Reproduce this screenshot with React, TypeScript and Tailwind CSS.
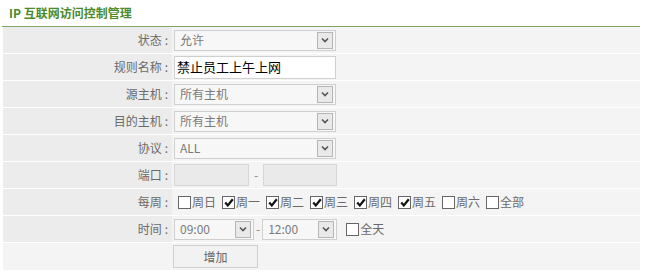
import { ReactNode } from "react";

const font = { fontFamily: '"Noto Sans CJK SC", "Liberation Sans", sans-serif' };

function Arrow() {
  return (
    <span className="flex h-[17px] w-[16px] items-center justify-center border border-[#b5b5b5] bg-[#e9e9e9]">
      <svg width="8" height="6" viewBox="0 0 8 6">
        <path d="M1 1.5 L4 4.5 L7 1.5" fill="none" stroke="#555" strokeWidth="1.6" />
      </svg>
    </span>
  );
}

function Select({ value, width }: { value: string; width: string }) {
  return (
    <div className={`flex h-[21px] ${width} items-center justify-between border border-[#cfcfcf] bg-[#f7f7f7] pl-[5px] pr-[2px]`}>
      <span className="text-[12px] text-[#7a7a7a]">{value}</span>
      <Arrow />
    </div>
  );
}

function Box({ checked }: { checked?: boolean }) {
  return (
    <span className="flex h-[13px] w-[13px] items-center justify-center border border-[#666] bg-white">
      {checked && (
        <svg width="10" height="9" viewBox="0 0 10 9">
          <path d="M1.2 4.6 L3.8 7.4 L8.8 1.2" fill="none" stroke="#111" strokeWidth="2.2" />
        </svg>
      )}
    </span>
  );
}

function Row({ label, children }: { label: string; children: ReactNode }) {
  return (
    <div className="flex h-[27px] border-b border-white">
      <div className="flex w-[169px] items-center justify-end bg-[#ececec] pr-[4px] text-[12px] text-[#6a6a6a]">
        {label}
        <span className="ml-[3px]">:</span>
      </div>
      <div className="flex flex-1 items-center bg-[#f4f4f4] pl-[2px]">{children}</div>
    </div>
  );
}

const days: [string, boolean][] = [
  ["周日", false],
  ["周一", true],
  ["周二", true],
  ["周三", true],
  ["周四", true],
  ["周五", true],
  ["周六", false],
  ["全部", false],
];

export default function App() {
  return (
    <div className="h-[278px] w-[647px] bg-white" style={font}>
      {/* Title */}
      <div className="flex h-[26px] items-center pl-[9px] text-[12px] font-bold text-[#4b8a2b]">
        IP 互联网访问控制管理
      </div>
      <div className="mx-[2px] w-[638px] border-t border-[#7fa865]" />

      <div className="ml-[3px] w-[637px]">
        <Row label="状态">
          <Select value="允许" width="w-[162px]" />
        </Row>
        <Row label="规则名称">
          <div className="flex h-[23px] w-[162px] items-center border border-[#cfcfcf] bg-white pl-[2px] text-[13px] text-black">
            禁止员工上午上网
          </div>
        </Row>
        <Row label="源主机">
          <Select value="所有主机" width="w-[162px]" />
        </Row>
        <Row label="目的主机">
          <Select value="所有主机" width="w-[162px]" />
        </Row>
        <Row label="协议">
          <Select value="ALL" width="w-[162px]" />
        </Row>
        <Row label="端口">
          <div className="h-[22px] w-[75px] border border-[#d6d6d6] bg-[#eaeaea]" />
          <span className="mx-[5px] text-[12px] text-[#888]">-</span>
          <div className="h-[22px] w-[74px] border border-[#d6d6d6] bg-[#eaeaea]" />
        </Row>
        <Row label="每周">
          <div className="flex items-center gap-[6px] pl-[4px] text-[12px] text-[#6a6a6a]">
            {days.map(([d, c]) => (
              <label key={d} className="flex items-center gap-[1px]">
                <Box checked={c} />
                <span>{d}</span>
              </label>
            ))}
          </div>
        </Row>
        <Row label="时间">
          <Select value="09:00" width="w-[80px]" />
          <span className="mx-[2px] text-[12px] text-[#888]">-</span>
          <Select value="12:00" width="w-[75px]" />
          <span className="ml-[9px] flex items-center gap-[1px] text-[12px] text-[#6a6a6a]">
            <Box />
            全天
          </span>
        </Row>
        <div className="flex h-[27px] items-center bg-[#f4f4f4] pl-[170px]">
          <button className="h-[23px] w-[85px] border border-[#cfcfcf] bg-[#f2f2f2] text-[12px] text-[#666]">
            增加
          </button>
        </div>
      </div>
    </div>
  );
}
